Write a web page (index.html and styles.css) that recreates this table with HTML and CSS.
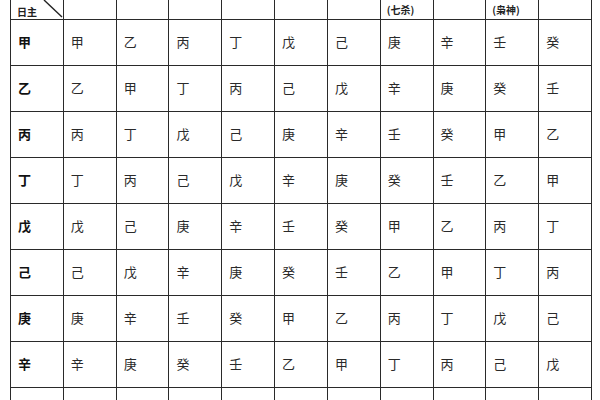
FILE: index.html
```html
<!DOCTYPE html>
<html lang="zh">
<head>
<meta charset="utf-8">
<link rel="stylesheet" href="styles.css">
</head>
<body>
<table class="grid">
  <colgroup>
    <col><col><col><col><col><col><col><col><col><col><col>
  </colgroup>
  <tr class="head">
    <th class="corner"><span class="rz">日主</span><svg class="diag" width="52" height="19" viewBox="0 0 52 19"><line x1="33" y1="0" x2="51" y2="17" stroke="#222" stroke-width="1.4"/></svg></th>
    <th></th><th></th><th></th><th></th><th></th><th></th>
    <th>(七杀)</th><th></th><th>(枭神)</th><th></th>
  </tr>
  <tr><th>甲</th><td>甲</td><td>乙</td><td>丙</td><td>丁</td><td>戊</td><td>己</td><td>庚</td><td>辛</td><td>壬</td><td>癸</td></tr>
  <tr><th>乙</th><td>乙</td><td>甲</td><td>丁</td><td>丙</td><td>己</td><td>戊</td><td>辛</td><td>庚</td><td>癸</td><td>壬</td></tr>
  <tr><th>丙</th><td>丙</td><td>丁</td><td>戊</td><td>己</td><td>庚</td><td>辛</td><td>壬</td><td>癸</td><td>甲</td><td>乙</td></tr>
  <tr><th>丁</th><td>丁</td><td>丙</td><td>己</td><td>戊</td><td>辛</td><td>庚</td><td>癸</td><td>壬</td><td>乙</td><td>甲</td></tr>
  <tr><th>戊</th><td>戊</td><td>己</td><td>庚</td><td>辛</td><td>壬</td><td>癸</td><td>甲</td><td>乙</td><td>丙</td><td>丁</td></tr>
  <tr><th>己</th><td>己</td><td>戊</td><td>辛</td><td>庚</td><td>癸</td><td>壬</td><td>乙</td><td>甲</td><td>丁</td><td>丙</td></tr>
  <tr><th>庚</th><td>庚</td><td>辛</td><td>壬</td><td>癸</td><td>甲</td><td>乙</td><td>丙</td><td>丁</td><td>戊</td><td>己</td></tr>
  <tr><th>辛</th><td>辛</td><td>庚</td><td>癸</td><td>壬</td><td>乙</td><td>甲</td><td>丁</td><td>丙</td><td>己</td><td>戊</td></tr>
  <tr><th></th><td></td><td></td><td></td><td></td><td></td><td></td><td></td><td></td><td></td><td></td></tr>
</table>
</body>
</html>
```
FILE: styles.css
```css
html, body {
  margin: 0;
  padding: 0;
  background: #fff;
  overflow: hidden;
}
body {
  font-family: "Noto Sans CJK SC", "Noto Sans", sans-serif;
  color: #2a2a2a;
}
.grid {
  margin-left: 10px;
  width: 582px;
  table-layout: fixed;
  border-collapse: collapse;
}
.grid th, .grid td {
  border: 1.5px solid #2a2a2a;
  height: 43px;
  padding: 0 0 2px 7px;
  text-align: left;
  vertical-align: middle;
  font-size: 13px;
  font-weight: 400;
  line-height: 1;
}
.grid th {
  font-weight: 700;
  color: #111;
  font-size: 13px;
}
.grid .head th {
  border-top: none;
  height: 19px;
  font-size: 10px;
  font-weight: 700;
  color: #222;
  padding: 0 0 0 6px;
}
.grid .corner {
  position: relative;
}
.rz {
  display: inline-block;
  padding-top: 4px;
}
.diag {
  position: absolute;
  left: 0;
  top: 0;
}
```
